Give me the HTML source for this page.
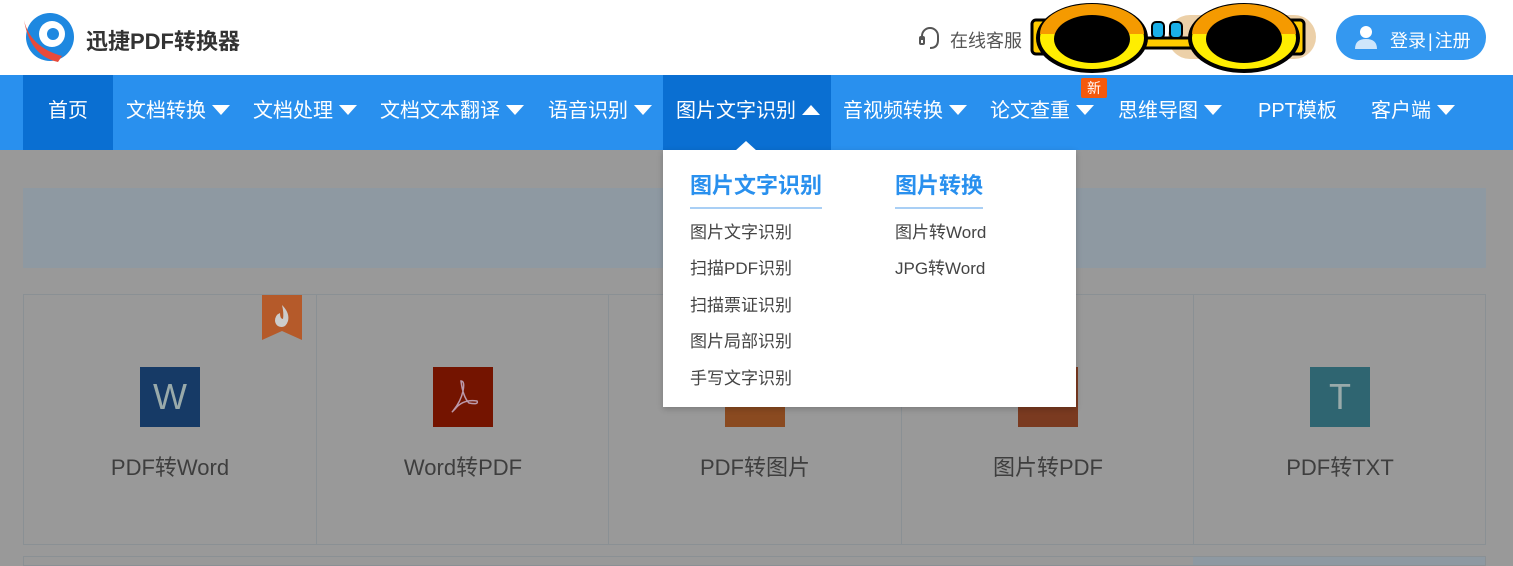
<!DOCTYPE html>
<html><head><meta charset="utf-8"><style>
*{margin:0;padding:0;box-sizing:border-box}
body{width:1513px;height:563px;overflow:hidden;position:relative;background:#999;font-family:"Liberation Sans","Noto Sans CJK SC",sans-serif}
.a{position:absolute;white-space:nowrap}
.hdr{position:absolute;left:0;top:0;width:1513px;height:75px;background:#fff}
.nav{position:absolute;left:0;top:75px;width:1513px;height:75px;background:#2990ee}
.ni{position:absolute;top:74px;height:75px;line-height:75px;color:#fff;font-size:20px}
.tri{display:inline-block;width:0;height:0;border-left:9px solid transparent;border-right:9px solid transparent;border-top:10px solid #fff;margin-left:6px;vertical-align:middle;position:relative;top:-2px}
.ic{position:absolute;top:367px;width:60px;height:60px;color:#9aa;font-size:36px;text-align:center;line-height:60px}
.lb{position:absolute;top:450px;font-size:22px;color:#3e3e3e;text-align:center;width:292px}
.dd{position:absolute;left:663px;top:150px;width:413px;height:257px;background:#fff;box-shadow:0 2px 6px rgba(0,0,0,.2)}
.h{position:absolute;font-size:22px;font-weight:bold;color:#2990ee;top:168px;padding-bottom:7px;border-bottom:2px solid #a9cff5}
.it{position:absolute;font-size:17px;color:#444}
</style></head><body>
<div class="hdr"></div>
<svg class="a" style="left:22px;top:12px" width="54" height="52" viewBox="0 0 54 52"><circle cx="28" cy="25" r="24" fill="#1e88e0"/><circle cx="30" cy="22" r="13" fill="#fff"/><circle cx="31" cy="22" r="6" fill="#1e88e0"/><path d="M2 8 Q8 35 40 44 L36 50 Q8 44 2 8Z" fill="#e84a3a"/></svg>
<div class="a" style="left:86px;top:24px;font-size:22px;font-weight:bold;color:#333">迅捷PDF转换器</div>
<svg class="a" style="left:917px;top:26px" width="26" height="26" viewBox="0 0 26 26" fill="none" stroke="#555" stroke-width="2"><path d="M5 14 V10 A8 8 0 0 1 21 10 V14"/><rect x="3" y="11" width="4" height="7" rx="1"/><path d="M21 14 Q21 22 13 22"/></svg>
<div class="a" style="left:950px;top:27px;font-size:18px;color:#555">在线客服</div>
<div class="a" style="left:1168px;top:15px;width:148px;height:44px;border-radius:22px;background:#ecd0a8"></div>
<svg class="a" style="left:1030px;top:2px" width="280" height="72" viewBox="0 0 280 72"><rect x="2" y="18" width="22" height="34" rx="4" fill="#fc0" stroke="#000" stroke-width="3"/><rect x="252" y="18" width="22" height="34" rx="4" fill="#fc0" stroke="#000" stroke-width="3"/><rect x="100" y="36" width="80" height="10" fill="#fc0" stroke="#000" stroke-width="3"/><rect x="122" y="20" width="12" height="16" rx="4" fill="#1ab0e8" stroke="#000" stroke-width="2"/><rect x="140" y="20" width="12" height="16" rx="4" fill="#1ab0e8" stroke="#000" stroke-width="2"/><ellipse cx="62" cy="36" rx="54" ry="33" fill="#ffee00" stroke="#000" stroke-width="4"/><ellipse cx="214" cy="36" rx="54" ry="33" fill="#ffee00" stroke="#000" stroke-width="4"/><path d="M10 32 A52 30 0 0 1 114 32Z" fill="#f59a00"/><path d="M162 32 A52 30 0 0 1 266 32Z" fill="#f59a00"/><ellipse cx="62" cy="37" rx="38" ry="24" fill="#000"/><ellipse cx="214" cy="37" rx="38" ry="24" fill="#000"/></svg>
<div class="a" style="left:1336px;top:15px;width:150px;height:45px;border-radius:23px;background:#3498f0"></div>
<svg class="a" style="left:1352px;top:23px" width="28" height="28" viewBox="0 0 28 28"><circle cx="14" cy="9" r="6" fill="#fff"/><path d="M3 26 Q3 16 14 16 Q25 16 25 26Z" fill="#cfe6fb"/></svg>
<div class="a" style="left:1390px;top:27px;font-size:18px;color:#fff">登录<span style="margin:0 2px">|</span>注册</div>

<div class="nav"></div>
<div class="a" style="left:23px;top:75px;width:90px;height:75px;background:#0a6fd2"></div>
<div class="a" style="left:663px;top:75px;width:168px;height:75px;background:#0a6fd2"></div>
<div class="ni" style="left:48px">首页</div>
<div class="ni" style="left:126px">文档转换<span class="tri"></span></div>
<div class="ni" style="left:253px">文档处理<span class="tri"></span></div>
<div class="ni" style="left:380px">文档文本翻译<span class="tri"></span></div>
<div class="ni" style="left:548px">语音识别<span class="tri"></span></div>
<div class="ni" style="left:676px">图片文字识别<span class="tri" style="border-top:none;border-bottom:10px solid #fff"></span></div>
<div class="ni" style="left:843px">音视频转换<span class="tri"></span></div>
<div class="ni" style="left:990px">论文查重<span class="tri"></span></div>
<div class="a" style="left:1081px;top:78px;width:26px;height:20px;background:#f5590c;color:#fff;font-size:14px;text-align:center;line-height:20px;border-radius:2px">新</div>
<div class="ni" style="left:1118px">思维导图<span class="tri"></span></div>
<div class="ni" style="left:1258px">PPT模板</div>
<div class="ni" style="left:1371px">客户端<span class="tri"></span></div>

<div class="a" style="left:23px;top:188px;width:1463px;height:80px;background:#8e99a2"></div>
<div class="a" style="left:23px;top:294px;width:1463px;height:251px;border:1px solid #8a9094"></div>
<div class="a" style="left:316px;top:294px;width:1px;height:251px;background:#8a9094"></div>
<div class="a" style="left:608px;top:294px;width:1px;height:251px;background:#8a9094"></div>
<div class="a" style="left:901px;top:294px;width:1px;height:251px;background:#8a9094"></div>
<div class="a" style="left:1193px;top:294px;width:1px;height:251px;background:#8a9094"></div>
<div class="a" style="left:23px;top:556px;width:1463px;height:10px;border:1px solid #8a9094"></div>
<div class="a" style="left:1193px;top:557px;width:292px;height:8px;background:#8e99a2"></div>
<svg class="a" style="left:262px;top:295px" width="40" height="45" viewBox="0 0 40 45"><path d="M0 0H40V45L20 36L0 45Z" fill="#b55a2a"/><path d="M20 10 Q28 18 26 26 Q24 32 20 32 Q14 32 13 26 Q13 20 18 18 Q18 24 21 24 Q22 18 20 10Z" fill="#ccc"/></svg>
<div class="ic" style="left:140px;background:#163a66">W</div>
<div class="ic" style="left:433px;background:#741400"><svg width="40" height="40" viewBox="0 0 40 40" style="margin-top:10px" fill="none" stroke="#b9a" stroke-width="1.5"><path d="M18 4 Q22 4 20 14 Q18 24 10 34 Q8 36 12 32 Q20 22 34 24 Q36 28 26 26 Q20 20 18 4Z"/></svg></div>
<div class="ic" style="left:725px;background:#8a4a20"></div>
<div class="ic" style="left:1018px;background:#7a3a20"></div>
<div class="ic" style="left:1310px;background:#2f6571">T</div>
<div class="lb" style="left:24px">PDF转Word</div>
<div class="lb" style="left:317px">Word转PDF</div>
<div class="lb" style="left:609px">PDF转图片</div>
<div class="lb" style="left:902px">图片转PDF</div>
<div class="lb" style="left:1194px">PDF转TXT</div>

<div class="dd"></div>
<div class="a" style="left:735px;top:141px;width:0;height:0;border-left:11px solid transparent;border-right:11px solid transparent;border-bottom:10px solid #fff"></div>
<div class="h" style="left:690px">图片文字识别</div>
<div class="h" style="left:895px">图片转换</div>
<div class="it" style="left:690px;top:218px">图片文字识别</div>
<div class="it" style="left:690px;top:254px">扫描PDF识别</div>
<div class="it" style="left:690px;top:291px">扫描票证识别</div>
<div class="it" style="left:690px;top:327px">图片局部识别</div>
<div class="it" style="left:690px;top:364px">手写文字识别</div>
<div class="it" style="left:895px;top:218px">图片转Word</div>
<div class="it" style="left:895px;top:254px">JPG转Word</div>
</body></html>
